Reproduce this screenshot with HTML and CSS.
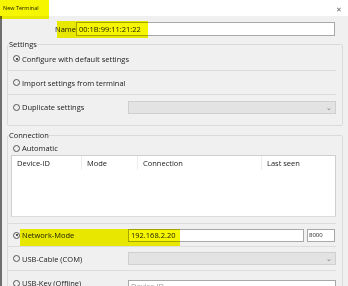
FILE: index.html
```html
<!DOCTYPE html>
<html lang="en">
<head>
    <meta charset="UTF-8">
    <title>New Terminal</title>
    <link rel="stylesheet" href="styles.css">
</head>
<body>
    <div class="window">
        <div class="titlebar">
            <span class="title">New Terminal</span>
            <span class="close">&#x2715;</span>
        </div>

        <div class="dialog">
            <div class="name-row">
                <label for="name">Name</label>
                <input id="name" class="field name-field" value="00:1B:99:11:21:22">
            </div>

            <fieldset class="group settings">
                <legend>Settings</legend>
                <div class="option">
                    <span class="radio checked"></span>
                    <span>Configure with default settings</span>
                </div>
                <div class="option">
                    <span class="radio"></span>
                    <span>Import settings from terminal</span>
                </div>
                <div class="option">
                    <span class="radio"></span>
                    <span class="option-label">Duplicate settings</span>
                    <div class="combo"><span class="arrow">&#x2304;</span></div>
                </div>
            </fieldset>

            <fieldset class="group connection">
                <legend>Connection</legend>
                <div class="option auto">
                    <span class="radio"></span>
                    <span>Automatic</span>
                </div>
                <div class="listview">
                    <div class="list-head">
                        <span class="col col-id">Device-ID</span>
                        <span class="col col-mode">Mode</span>
                        <span class="col col-conn">Connection</span>
                        <span class="col col-seen">Last seen</span>
                    </div>
                </div>
                <div class="option">
                    <span class="radio checked"></span>
                    <span class="option-label">Network-Mode</span>
                    <input class="field ip-field" value="192.168.2.20">
                    <input class="field port-field" value="8000">
                </div>
                <div class="option">
                    <span class="radio"></span>
                    <span class="option-label">USB-Cable (COM)</span>
                    <div class="combo"><span class="arrow">&#x2304;</span></div>
                </div>
                <div class="option">
                    <span class="radio"></span>
                    <span class="option-label">USB-Key (Offline)</span>
                    <input class="field key-field" placeholder="Device-ID">
                </div>
            </fieldset>
        </div>

        <!-- highlighter marks -->
        <div class="marker mark-title"></div>
        <div class="marker mark-name"></div>
        <div class="marker mark-network"></div>
    </div>
</body>
</html>
```

FILE: styles.css
```css
* {
    box-sizing: border-box;
}

body {
    margin: 0;
    font-family: "Open Sans", "Noto Sans", sans-serif;
    font-size: 7.5px;
    color: #1a1a1a;
}

.window {
    position: relative;
    width: 348px;
    height: 286px;
    overflow: hidden;
    background: #f0f0f0;
}

.titlebar {
    height: 16px;
    background: #fff;
    display: flex;
    align-items: center;
    justify-content: space-between;
    padding: 0 6px 0 3px;
}

.title {
    font-size: 5.5px;
}

.close {
    font-size: 7px;
    color: #666;
    padding-top: 2px;
}

.dialog {
    border-left: 2px solid #6e6e6e;
    height: 270px;
    padding: 6px 0 0 5px;
}

.name-row {
    display: flex;
    align-items: center;
    padding-left: 48px;
    height: 14px;
}

.name-row label {
    width: 21px;
}

.field {
    font: inherit;
    color: #1a1a1a;
    height: 13px;
    border: 1px solid #a8a8a8;
    background: #fff;
    padding: 0 2px;
    outline: none;
}

.name-field {
    width: 259px;
    height: 14px;
}

.group {
    margin: 3px 5px 0 0;
    padding: 0 6px 0 0;
    border: 1px solid #dadada;
    border-radius: 2px;
}

.group legend {
    padding: 0;
    margin-left: 1px;
    line-height: 10px;
}

.settings {
    padding-bottom: 6px;
}

.connection {
    margin-top: 4px;
}

.option {
    display: flex;
    align-items: center;
    height: 24px;
    padding-left: 5px;
    border-bottom: 1px solid #dcdcdc;
}

.option:last-child {
    border-bottom: none;
}

.settings .option:first-of-type {
    margin-top: -2px;
}

.radio {
    width: 7px;
    height: 7px;
    border: 1px solid #555;
    border-radius: 50%;
    margin-right: 2px;
    flex: none;
    position: relative;
}

.radio.checked::after {
    content: "";
    position: absolute;
    left: 1.5px;
    top: 1.5px;
    width: 2px;
    height: 2px;
    border-radius: 50%;
    background: #222;
}

.option-label {
    width: 106px;
}

.combo {
    width: 208px;
    height: 13px;
    background: #e3e3e3;
    border: 1px solid #cfcfcf;
    display: flex;
    justify-content: flex-end;
    align-items: flex-end;
    padding-right: 3px;
}

.arrow {
    font-size: 7px;
    line-height: 10px;
    color: #777;
}

.auto {
    height: 15px;
    padding-top: 1px;
    border-bottom: none;
}

.listview {
    height: 62px;
    margin: 0 0 6px 3px;
    background: #fff;
    border: 1px solid #cfcfcf;
    border-bottom: 1px solid #dcdcdc;
}

.list-head {
    display: flex;
    height: 14px;
}

.col {
    padding: 2px 0 0 5px;
    border-right: 1px solid #ececec;
}

.col-id { width: 70px; }
.col-mode { width: 56px; }
.col-conn { width: 124px; }
.col-seen { border-right: none; }

.connection .option:first-of-type + .listview + .option {
    border-top: 1px solid #dcdcdc;
}

.ip-field {
    width: 176px;
}

.port-field {
    width: 28px;
    margin-left: 3px;
    font-size: 6px;
    padding: 0 1px;
}

.key-field {
    width: 208px;
    margin-top: 6px;
}

.key-field::placeholder {
    color: #9a9a9a;
}

.marker {
    position: absolute;
    background: #f6f600;
    mix-blend-mode: multiply;
}

.mark-title {
    left: 0;
    top: 0;
    width: 49px;
    height: 19px;
}

.mark-name {
    left: 57px;
    top: 21px;
    width: 91px;
    height: 17px;
}

.mark-network {
    left: 20px;
    top: 229px;
    width: 160px;
    height: 17px;
}
```
